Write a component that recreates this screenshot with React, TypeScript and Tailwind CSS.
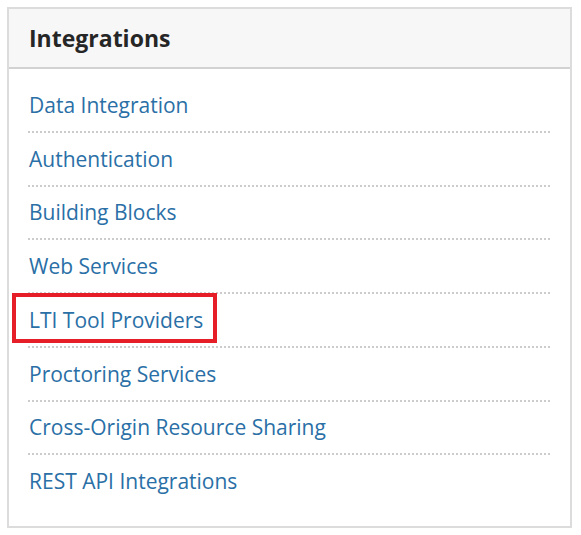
import React from "react";

const items = [
  "Data Integration",
  "Authentication",
  "Building Blocks",
  "Web Services",
  "LTI Tool Providers",
  "Proctoring Services",
  "Cross-Origin Resource Sharing",
  "REST API Integrations",
];

export default function App() {
  return (
    <div
      className="w-[581px] h-[535px] bg-white pt-[7px] pl-[7px]"
      style={{ fontFamily: '"Open Sans", "Noto Sans", sans-serif' }}
    >
      <div className="w-[565px] border-2 border-[#dcdcdc] bg-white">
        <div className="h-[60px] flex items-center px-[20px] bg-[#f7f7f7] border-b-2 border-[#d2d2d2]">
          <h2 className="text-[23px] font-bold text-[#262626] leading-none">Integrations</h2>
        </div>
        <ul className="pt-[10px] pb-[19px] pl-[19px] pr-[20px]">
          {items.map((t, i) => {
            const last = i === items.length - 1;
            return (
              <li
                key={t}
                className={
                  last
                    ? "relative h-[52px] flex items-center"
                    : "relative h-[53.75px] flex items-center border-b-2 border-dotted border-[#cccccc]"
                }
              >
                <a className="text-[21px] leading-[28px] text-[#2a6fa6] pl-[1px]" href="#">
                  {t}
                </a>
                {t === "LTI Tool Providers" && (
                  <div className="absolute left-[-16px] top-[-1px] w-[205px] h-[50px] border-[4px] border-[#e61e27]" />
                )}
              </li>
            );
          })}
        </ul>
      </div>
    </div>
  );
}
